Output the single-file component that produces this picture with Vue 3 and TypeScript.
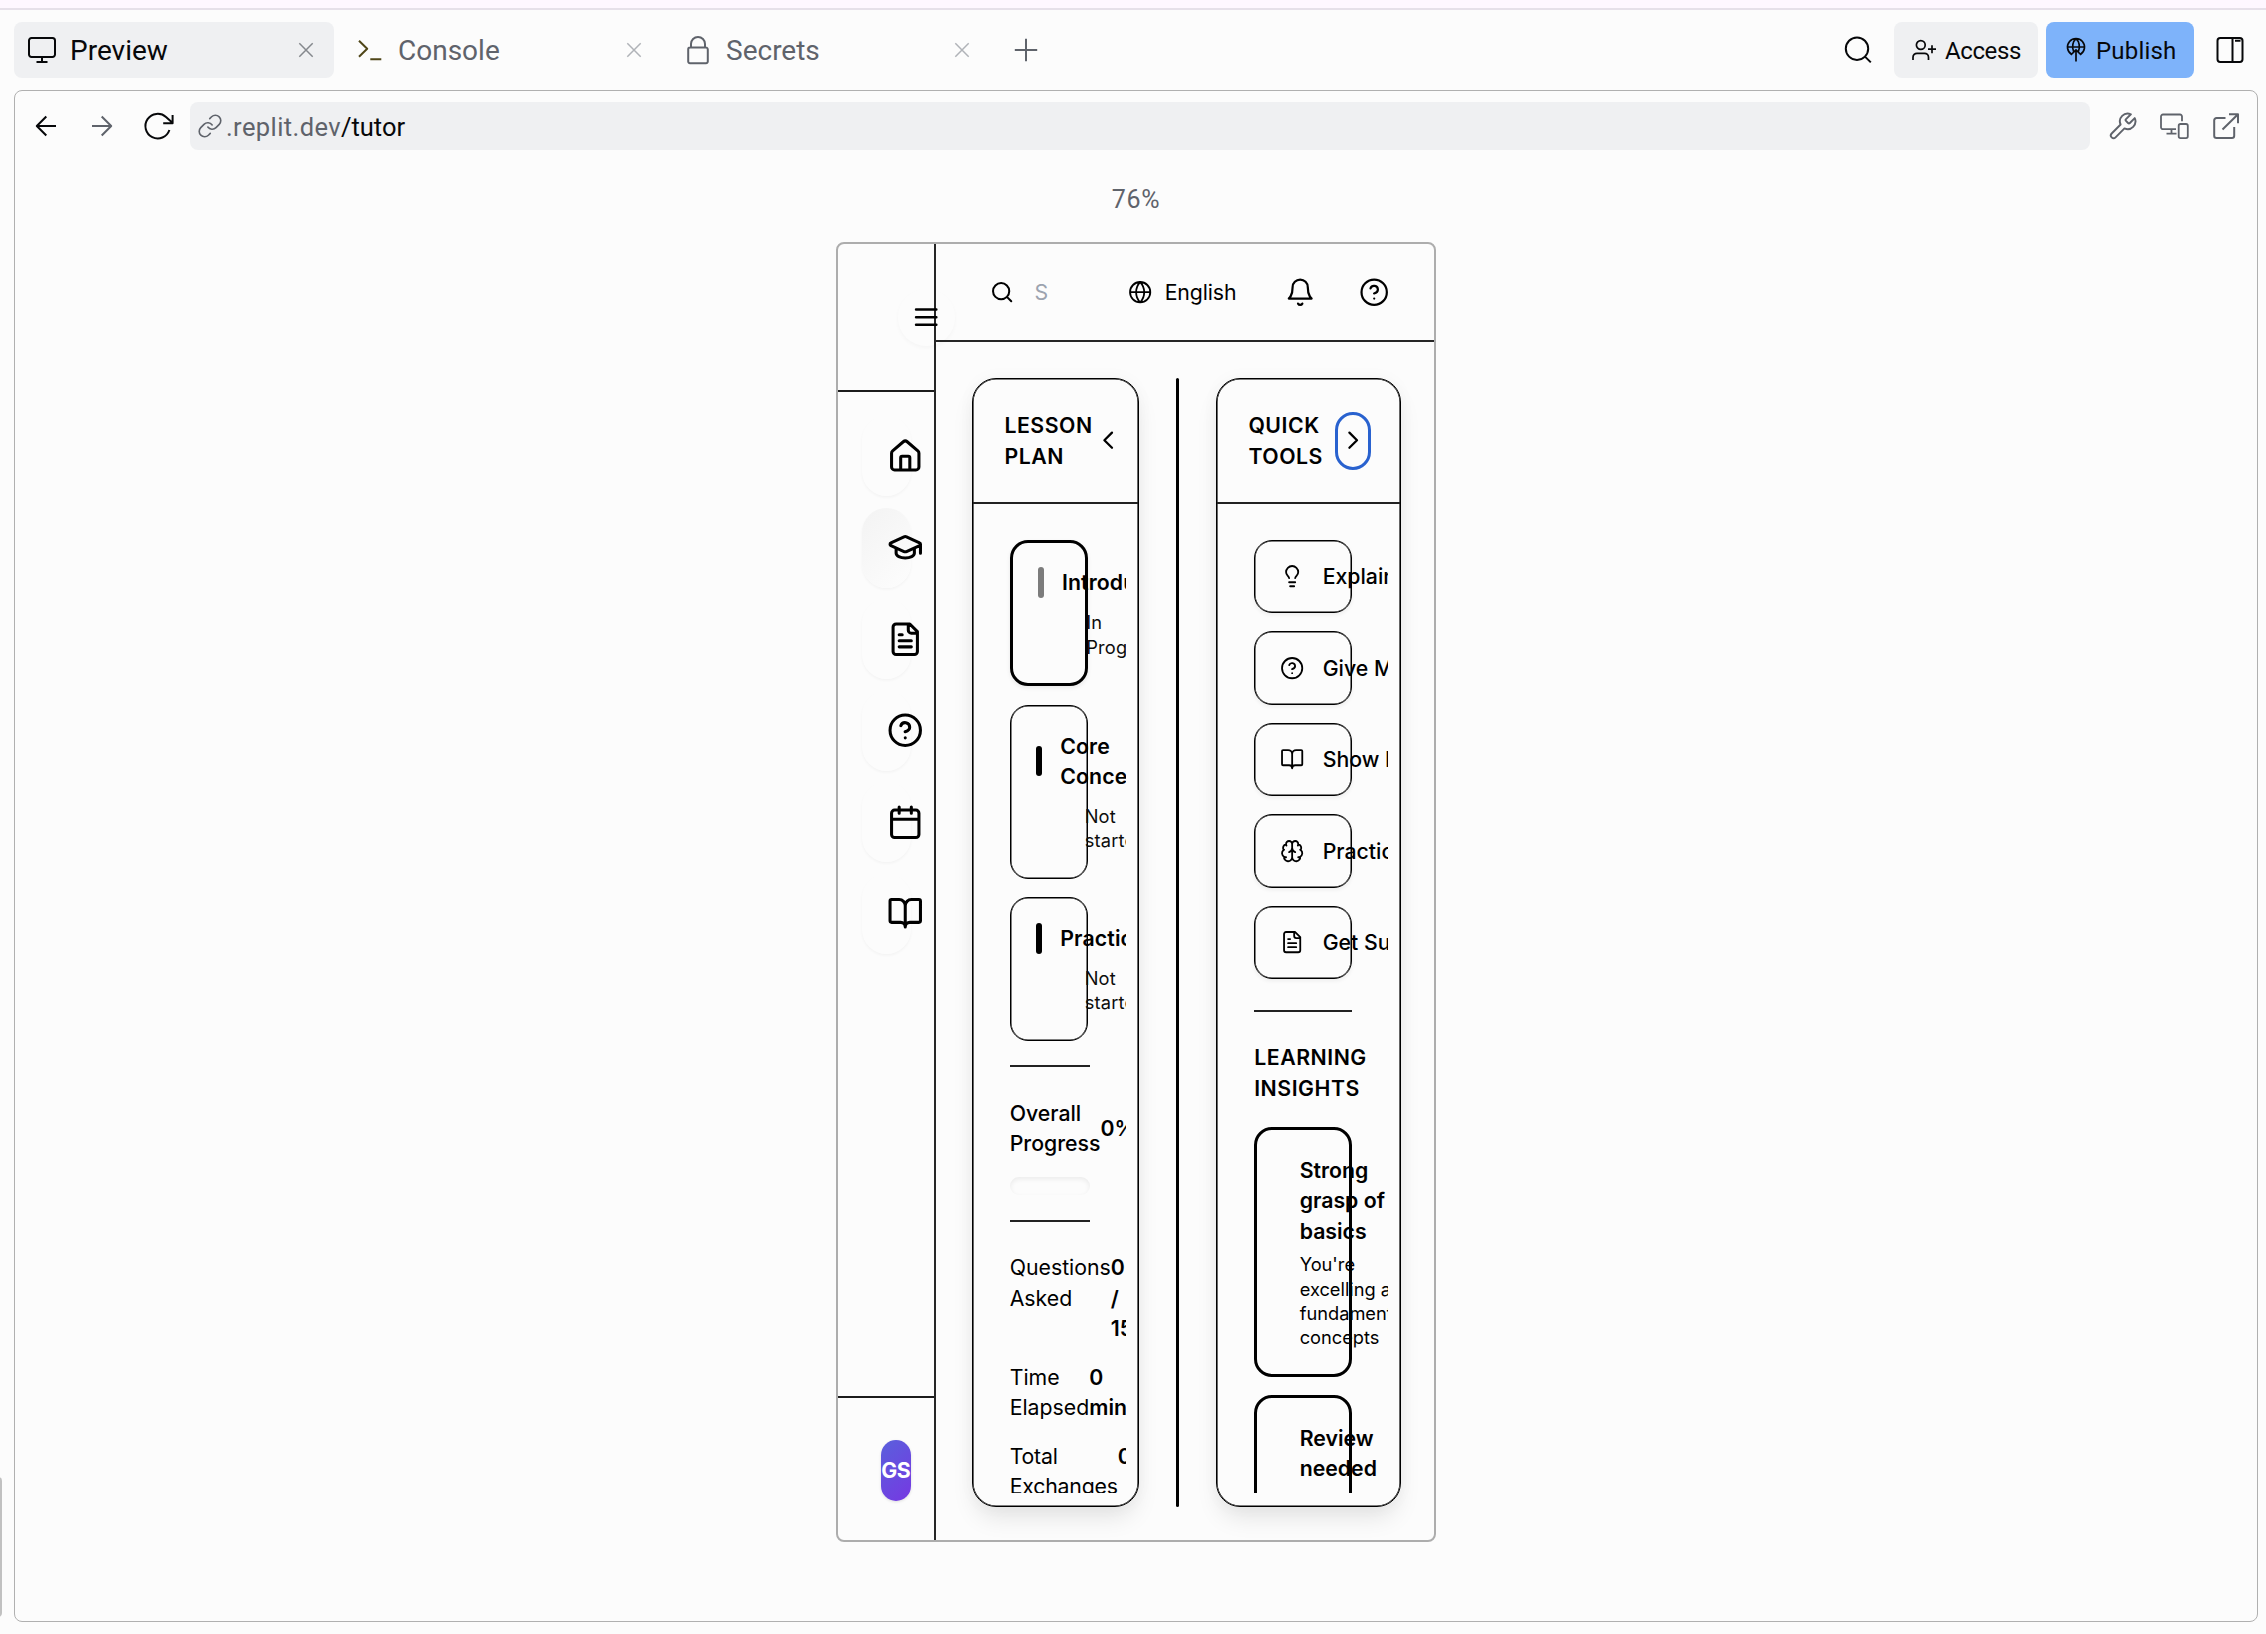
<script setup lang="ts">
import { h, type FunctionalComponent } from 'vue'

// Lucide outlines, drawn on a 24-unit grid
const paths: Record<string, string> = {
  menu: 'M4 12h16M4 6h16M4 18h16',
  home: 'M15 21v-8a1 1 0 0 0-1-1h-4a1 1 0 0 0-1 1v8M3 10a2 2 0 0 1 .709-1.528l7-5.999a2 2 0 0 1 2.582 0l7 5.999A2 2 0 0 1 21 10v9a2 2 0 0 1-2 2H5a2 2 0 0 1-2-2z',
  cap: 'M21.42 10.922a1 1 0 0 0-.019-1.838L12.83 5.18a2 2 0 0 0-1.66 0L2.6 9.08a1 1 0 0 0 0 1.832l8.57 3.908a2 2 0 0 0 1.66 0zM22 10v6M6 12.5V16a6 3 0 0 0 12 0v-3.5',
  file: 'M15 2H6a2 2 0 0 0-2 2v16a2 2 0 0 0 2 2h12a2 2 0 0 0 2-2V7ZM14 2v4a2 2 0 0 0 2 2h4M10 9H8M16 13H8M16 17H8',
  help: 'M22 12a10 10 0 1 1-20 0a10 10 0 1 1 20 0ZM9.09 9a3 3 0 0 1 5.83 1c0 2-3 3-3 3M12 17h.01',
  calendar: 'M8 2v4M16 2v4M5 4h14a2 2 0 0 1 2 2v14a2 2 0 0 1-2 2H5a2 2 0 0 1-2-2V6a2 2 0 0 1 2-2ZM3 10h18',
  book: 'M12 7v14M3 18a1 1 0 0 1-1-1V4a1 1 0 0 1 1-1h5a4 4 0 0 1 4 4 4 4 0 0 1 4-4h5a1 1 0 0 1 1 1v13a1 1 0 0 1-1 1h-6a3 3 0 0 0-3 3 3 3 0 0 0-3-3z',
  search: 'M19 11a8 8 0 1 1-16 0a8 8 0 1 1 16 0ZM21 21l-4.3-4.3',
  globe: 'M22 12a10 10 0 1 1-20 0a10 10 0 1 1 20 0ZM12 2a14.5 14.5 0 0 0 0 20 14.5 14.5 0 0 0 0-20M2 12h20',
  bell: 'M6 8a6 6 0 0 1 12 0c0 7 3 9 3 9H3s3-2 3-9M10.3 21a1.94 1.94 0 0 0 3.4 0',
  left: 'm15 18-6-6 6-6',
  right: 'm9 18 6-6-6-6',
  bulb: 'M15 14c.2-1 .7-1.7 1.5-2.5 1-.9 1.5-2.2 1.5-3.5A6 6 0 0 0 6 8c0 1 .2 2.2 1.5 3.5.7.7 1.3 1.5 1.5 2.5M9 18h6M10 22h4',
  brain: 'M12 5a3 3 0 1 0-5.997.125 4 4 0 0 0-2.526 5.77 4 4 0 0 0 .556 6.588A4 4 0 1 0 12 18ZM12 5a3 3 0 1 1 5.997.125 4 4 0 0 1 2.526 5.77 4 4 0 0 1-.556 6.588A4 4 0 1 1 12 18ZM15 13a4.5 4.5 0 0 1-3-4 4.5 4.5 0 0 1-3 4M17.599 6.5a3 3 0 0 0 .399-1.375M6.003 5.125A3 3 0 0 0 6.401 6.5M3.477 10.896a4 4 0 0 1 .585-.396M19.938 10.5a4 4 0 0 1 .585.396M6 18a4 4 0 0 1-1.967-.516M19.967 17.484A4 4 0 0 1 18 18',
  link: 'M10 13a5 5 0 0 0 7.54.54l3-3a5 5 0 0 0-7.07-7.07l-1.72 1.71M14 11a5 5 0 0 0-7.54-.54l-3 3a5 5 0 0 0 7.07 7.07l1.71-1.71',
  wrench: 'M14.7 6.3a1 1 0 0 0 0 1.4l1.6 1.6a1 1 0 0 0 1.4 0l3.77-3.77a6 6 0 0 1-7.94 7.94l-6.91 6.91a2.12 2.12 0 0 1-3-3l6.91-6.91a6 6 0 0 1 7.94-7.94l-3.76 3.76z',
}

// Workspace glyphs, drawn on a 28-unit grid
const glyphs: Record<string, string> = {
  monitor: 'M3.5 2h21a2.5 2.5 0 0 1 2.5 2.5v14a2.5 2.5 0 0 1-2.5 2.5h-21a2.5 2.5 0 0 1-2.5-2.5v-14A2.5 2.5 0 0 1 3.5 2ZM14 21v5M8.5 26h11',
  terminal: 'm3 4.8 8.2 8-8.2 8M14.3 23.3h11',
  lock: 'M6 11.6h16a1.8 1.8 0 0 1 1.8 1.8v12a1.8 1.8 0 0 1-1.8 1.8H6a1.8 1.8 0 0 1-1.8-1.8v-12A1.8 1.8 0 0 1 6 11.6ZM7 11.5V8a7 7 0 0 1 14 0v3.5',
  close: 'm7.3 7.3 13.4 13.4M20.7 7.3 7.3 20.7',
  plus: 'M14 2.8v22.4M2.8 14h22.4',
  back: 'M14.3 4.5 4.8 14l9.5 9.5M4.8 14H24',
  forward: 'm13.7 4.5 9.5 9.5-9.5 9.5M23.2 14H4',
  reload: 'M24.4 18A12.3 12.3 0 1 1 21 5l6.4 5.7M27.6 3v8.2h-9.4',
  find: 'M24.2 12.7a11.2 11.2 0 1 1-22.4 0a11.2 11.2 0 1 1 22.4 0ZM21 20.6l5.8 5.8',
  user: 'M15.2 9a4.4 4.4 0 1 1-8.8 0a4.4 4.4 0 1 1 8.8 0ZM3 24v-2.7a4 4 0 0 1 4-4h7.5a4 4 0 0 1 4 4V24M22 9.2v8M18 13.2h8',
  publish: 'M7.5 18.2A8.5 8.5 0 1 1 16.5 18.2M3.6 11h16.8M9.6 15.5C7.7 11 8.7 5.5 12 2.6c3.3 2.9 4.3 8.4 2.4 12.9M12 25.5V14M6.8 19l5.2-5.2 5.2 5.2',
  panes: 'M4.2 2h19.6a2.7 2.7 0 0 1 2.7 2.7v18.6a2.7 2.7 0 0 1-2.7 2.7H4.2a2.7 2.7 0 0 1-2.7-2.7V4.7A2.7 2.7 0 0 1 4.2 2ZM16.5 2v24M19 4.8h5.5',
  devices: 'M22 9.3V4.5A2 2 0 0 0 20 2.5H3a2 2 0 0 0-2 2v10.7a2 2 0 0 0 2 2h13M11.5 17.2v4.5M6.5 21.7h10M20.5 12h5.5a1.8 1.8 0 0 1 1.8 1.8v10.5a1.8 1.8 0 0 1-1.8 1.8h-5.5a1.8 1.8 0 0 1-1.8-1.8V13.8a1.8 1.8 0 0 1 1.8-1.8Z',
  external: 'M13.5 6H4.5A2.3 2.3 0 0 0 2.2 8.3v15.4A2.3 2.3 0 0 0 4.5 26h15.4a2.3 2.3 0 0 0 2.3-2.3V15M17 2.3h9v9M26 2.3 10.5 17.5',
}

const Icon: FunctionalComponent<{ name: string; size: number; stroke?: number }> = (p) =>
  h('svg', {
    width: p.size, height: p.size, viewBox: '0 0 24 24', fill: 'none', stroke: 'currentColor',
    'stroke-width': p.stroke ?? 2, 'stroke-linecap': 'round', 'stroke-linejoin': 'round',
    style: { flex: 'none', display: 'block' },
  }, [h('path', { d: paths[p.name] })])
Icon.props = ['name', 'size', 'stroke']

const Glyph: FunctionalComponent<{ name: string; stroke?: number }> = (p) =>
  h('svg', {
    width: 28, height: 28, viewBox: '0 0 28 28', fill: 'none', stroke: 'currentColor',
    'stroke-width': p.stroke ?? 2, 'stroke-linejoin': 'round',
    style: { flex: 'none', display: 'block', overflow: 'visible' },
  }, [h('path', { d: glyphs[p.name] })])
Glyph.props = ['name', 'stroke']

const tabs = [
  { label: 'Preview', icon: 'monitor', active: true },
  { label: 'Console', icon: 'terminal', active: false },
  { label: 'Secrets', icon: 'lock', active: false },
]
const nav = ['home', 'cap', 'file', 'help', 'calendar', 'book']
const lessons = [
  { title: ['Introduction'], status: ['In', 'Progress'], active: true },
  { title: ['Core', 'Concepts'], status: ['Not', 'started'], active: false },
  { title: ['Practice'], status: ['Not', 'started'], active: false },
]
const stats = [
  { label: ['Questions', 'Asked'], value: ['0', '/', '15'] },
  { label: ['Time', 'Elapsed'], value: ['0', 'min'] },
  { label: ['Total', 'Exchanges'], value: ['0'] },
]
const tools = [
  { icon: 'bulb', label: 'Explain' },
  { icon: 'help', label: 'Give Me' },
  { icon: 'book', label: 'Show Examples' },
  { icon: 'brain', label: 'Practice' },
  { icon: 'file', label: 'Get Summary' },
]
const insights = [
  { title: ['Strong', 'grasp of', 'basics'], text: ["You're", 'excelling at', 'fundamental', 'concepts'] },
  { title: ['Review', 'needed'], text: [] },
]
</script>

<template>
  <div class="workspace">
    <div class="strip"></div>
    <div class="edge-thumb"></div>

    <div class="tabbar">
      <div v-for="t in tabs" :key="t.label" class="tab" :class="[{ active: t.active }, t.icon]">
        <Glyph class="tab-icon" :name="t.icon" />
        <span class="tab-label">{{ t.label }}</span>
        <Glyph class="tab-close" name="close" :stroke="1.5" />
      </div>
      <Glyph class="add" name="plus" />
      <span class="grow"></span>
      <Glyph class="find" name="find" />
      <button class="btn access"><Glyph name="user" :stroke="1.7" /><span>Access</span></button>
      <button class="btn publish"><Glyph name="publish" :stroke="1.7" /><span>Publish</span></button>
      <Glyph class="panes" name="panes" />
    </div>

    <div class="pane">
      <div class="urlbar">
        <Glyph name="back" />
        <Glyph class="muted" name="forward" />
        <Glyph class="reload" name="reload" />
        <div class="address">
          <Icon class="muted" name="link" :size="26" :stroke="1.5" />
          <span class="host">.replit.dev</span><span class="path">/tutor</span>
        </div>
        <Icon class="muted wrench" name="wrench" :size="31" :stroke="1.5" />
        <Glyph class="muted devices" name="devices" :stroke="1.8" />
        <Glyph class="muted" name="external" />
      </div>
      <div class="scale">76%</div>

      <div class="device">
        <aside class="side">
          <div class="side-top">
            <div class="menu"><Icon name="menu" :size="30.4" /></div>
          </div>
          <nav class="nav">
            <div v-for="(n, i) in nav" :key="n" class="nav-item" :class="{ on: i === 1 }">
              <Icon :name="n" :size="36.5" />
            </div>
          </nav>
          <div class="side-foot"><div class="avatar">GS</div></div>
        </aside>

        <section class="main">
          <header class="top">
            <Icon name="search" :size="24.3" />
            <span class="query">S</span>
            <Icon name="globe" :size="24.3" :stroke="1.8" />
            <span class="lang">English</span>
            <Icon name="bell" :size="30.4" :stroke="1.75" />
            <Icon class="top-help" name="help" :size="30.4" :stroke="1.75" />
          </header>

          <div class="columns">
            <div class="card lesson">
              <div class="card-head">
                <h2>LESSON<br />PLAN</h2>
                <span class="toggle"><Icon name="left" :size="30.4" :stroke="1.8" /></span>
              </div>
              <div class="scroll">
                <div class="stack items">
                  <div v-for="l in lessons" :key="l.title[0]" class="item" :class="{ current: l.active }">
                    <div class="item-title">
                      <i class="bar"></i>
                      <b><span v-for="w in l.title" :key="w">{{ w }}</span></b>
                    </div>
                    <div class="item-status"><span v-for="w in l.status" :key="w">{{ w }}</span></div>
                  </div>
                </div>
                <div class="rule first"></div>
                <div class="progress">
                  <span class="progress-label">Overall<br />Progress</span><b>0%</b>
                </div>
                <div class="track"></div>
                <div class="rule second"></div>
                <div class="stack stats">
                  <div v-for="s in stats" :key="s.label[0]" class="stat">
                    <div><span v-for="w in s.label" :key="w">{{ w }}</span></div>
                    <b><span v-for="w in s.value" :key="w">{{ w }}</span></b>
                  </div>
                </div>
              </div>
            </div>

            <div class="splitter"></div>

            <div class="card quick">
              <div class="card-head">
                <h2>QUICK<br />TOOLS</h2>
                <span class="toggle focused"><Icon name="right" :size="30.4" :stroke="1.8" /></span>
              </div>
              <div class="scroll">
                <div class="stack">
                  <div v-for="t in tools" :key="t.label" class="tool">
                    <Icon :name="t.icon" :size="24.3" :stroke="1.8" /><span>{{ t.label }}</span>
                  </div>
                </div>
                <div class="rule third"></div>
                <h2 class="sub">LEARNING<br />INSIGHTS</h2>
                <div class="stack">
                  <div v-for="s in insights" :key="s.title[0]" class="insight">
                    <b><span v-for="w in s.title" :key="w">{{ w }}</span></b>
                    <p><span v-for="w in s.text" :key="w">{{ w }}</span></p>
                  </div>
                </div>
              </div>
            </div>
          </div>
        </section>
      </div>
    </div>
  </div>
</template>

<style>
body { background: #fcfcfc; overflow: hidden; }
</style>

<style scoped>
* { box-sizing: border-box; }
.workspace {
  position: relative; width: 2266px; height: 1634px; overflow: hidden;
  display: flex; flex-direction: column; background: #fcfcfc; color: #07080a;
  font-family: Roboto, "Noto Sans", sans-serif; font-size: 24px;
}
.strip { flex: none; height: 10px; background: #fef7ff; border-bottom: 2px solid #e6e0e9; }
.edge-thumb { position: absolute; left: -6px; top: 1477px; width: 8px; height: 140px; border-radius: 4px; background: #c1c1c1; }
.muted { color: #5f636b; }
.grow { flex: 1; }

.tabbar { flex: none; height: 80px; padding: 0 22px 0 14px; display: flex; align-items: center; }
.tab {
  width: 320px; height: 56px; margin-right: 8px; padding: 0 14px; border-radius: 8px;
  display: flex; align-items: center; color: #5f636b; font-size: 28px;
}
.tab.active { background: #eff0f2; color: #07080a; }
.tab.terminal .tab-icon { color: #4f4618; }
.tab-label { flex: 1; margin-left: 14px; padding-top: 2px; line-height: 36px; }
.tab-close { color: #b0b3b8; }
.tab.active .tab-close { color: #85888d; }
.add { margin-left: 14px; color: #5f636b; }
.find { margin-right: 22px; }
.btn {
  height: 56px; border: 0; border-radius: 8px; padding: 0; display: flex; align-items: center;
  font: 24px/32px Roboto, "Noto Sans", sans-serif; color: #07080a;
}
.btn span { padding-top: 2px; }
.access { width: 144px; padding-left: 16px; background: #eff0f2; margin-right: 8px; }
.access span { margin-left: 7px; letter-spacing: -.4px; }
.publish { width: 148px; padding-left: 18px; background: #7eb3fa; margin-right: 22px; }
.publish span { margin-left: 4px; letter-spacing: .2px; }

.pane {
  flex: none; width: 2244px; height: 1532px; margin-left: 14px; border: 1px solid #b0b0b0; border-radius: 8px;
  display: flex; flex-direction: column; align-items: center;
}
.urlbar { align-self: stretch; margin-top: 11px; height: 48px; padding: 0 16px 0 17px; display: flex; align-items: center; gap: 28px; }
.reload { margin-left: 1px; }
.address {
  flex: none; width: 1900px; height: 48px; margin-left: -11px; margin-right: -11px; padding-left: 7px;
  border-radius: 8px; background: #eff0f2; display: flex; align-items: center;
}
.wrench { margin-right: -6px; }
.devices { margin-right: -4px; }
.host, .path { font-size: 25.5px; padding-top: 2px; }
.host { margin-left: 3px; color: #5f636b; letter-spacing: .4px; }
.path { letter-spacing: 0; }
.scale { height: 32px; margin-top: 33px; font-size: 25px; line-height: 34px; color: #5f636b; letter-spacing: .7px; }

.device {
  flex: none; width: 600px; height: 1300px; margin-top: 27px; border: 2px solid #adadad; border-radius: 8px;
  display: flex; color: #000; font: 21.28px/30.4px Inter, "Liberation Sans", sans-serif;
}
.side { flex: none; width: 98px; border-right: 2px solid #262626; display: flex; flex-direction: column; }
.side-top { flex: none; height: 148px; border-bottom: 2px solid #1c1c1c; padding: 45px 0 0 60px; }
.menu {
  width: 57px; height: 57px; border-radius: 50%; display: flex; align-items: center; justify-content: center;
  box-shadow: 0 2px 4px rgba(0, 0, 0, .03);
}
.nav { flex: 1; padding: 24px 0 0 24px; display: flex; flex-direction: column; gap: 11.5px; }
.nav-item {
  width: 49px; height: 80px; border-radius: 24.5px; padding-left: 25px; display: flex; align-items: center;
  box-shadow: 0 1.5px 3px rgba(0, 0, 0, .04);
}
.nav-item.on { background: linear-gradient(135deg, #f3f3f3, #fdfdfd); }
.side-foot { flex: none; height: 144px; border-top: 2px solid #1c1c1c; padding: 42px 0 0 42.6px; }
.avatar {
  width: 30.4px; height: 61px; border-radius: 15.2px; display: flex; align-items: center; justify-content: center;
  background: linear-gradient(135deg, #5a60dc, #7638e2); color: #fff; font-weight: 700; letter-spacing: -.4px;
  box-shadow: 0 1px 3px rgba(0, 0, 0, .12);
}

.main { flex: none; width: 498px; display: flex; flex-direction: column; }
.top { flex: none; height: 98px; border-bottom: 2px solid #262626; padding: 0 0 0 54.2px; display: flex; align-items: center; }
.query { width: 94.6px; padding-left: 20px; margin-right: 19.3px; color: #9ca3af; }
.lang { width: 120.8px; margin-left: 12px; letter-spacing: -.1px; }
.top-help { margin-left: 43px; }

.columns { flex: none; height: 1129px; margin: 36px 0 0 36px; display: flex; }
.card {
  flex: none; height: 1129px; border: 1px solid #000; border-radius: 24px; display: flex; flex-direction: column;
  box-shadow: inset 0 0 0 .6px #000, 0 14px 24px -4px rgba(0, 0, 0, .1), 0 0 18px rgba(0, 0, 0, .03);
}
.lesson { width: 167.4px; margin-right: 36.6px; }
.splitter { flex: none; width: 3px; background: #000; border-radius: 1.5px; margin-right: 37px; }
.quick { width: 185px; }
.card-head { flex: none; height: 125px; border-bottom: 2px solid #222; display: flex; align-items: center; padding-left: 31.4px; }
h2 { margin: 0; font: 600 21.28px/30.4px Inter, "Liberation Sans", sans-serif; letter-spacing: .53px; white-space: nowrap; }
.lesson h2 { width: 89.5px; }
.quick .card-head h2 { width: 87px; }
.toggle { width: 36px; height: 58px; border-radius: 18px; display: flex; align-items: center; justify-content: center; flex: none; }
.lesson .toggle { margin-left: -4px; }
.toggle.focused { border: 3px solid #2962cf; }
.scroll { flex: none; height: 989px; margin-right: 12.2px; padding: 36px 36.4px 0 36.7px; overflow: hidden; }
.quick .scroll { padding-left: 37.2px; padding-right: 36px; }
.stack { display: flex; flex-direction: column; gap: 18.3px; }
.items { gap: 18.6px; }
.stack b span, .item-status span, .stat div span, p span { display: block; white-space: nowrap; }
b { font-weight: 600; }

.item {
  border: 1px solid #000; box-shadow: inset 0 0 0 .5px #000; border-radius: 18px; padding: 25px 25.4px;
  width: 78.5px;
}
.item.current { border-width: 3px; padding: 24.4px 25px; box-shadow: 0 2px 4px rgba(0, 0, 0, .08); }
.item-title { display: flex; align-items: center; gap: 18.2px; width: max-content; }
.item-title b { letter-spacing: .12px; }
.bar { width: 6px; height: 30.4px; border-radius: 3px; background: #000; }
.current .bar { background: #7c7c7c; }
.item-status { margin: 12.4px 0 0 48.6px; font-size: 18.24px; line-height: 24.32px; letter-spacing: .18px; color: #0c0c0c; }
.rule { width: 100%; height: 2px; background: #222; }
.first { margin: 24.6px 0 30.4px; }
.second { margin: 25px 0 30.4px; }
.third { margin: 30.8px 0 30.4px; }
.progress { display: flex; align-items: center; font-weight: 500; width: max-content; }
.track { height: 18.2px; margin-top: 18.2px; border-radius: 9px; box-shadow: inset 0 2px 5px rgba(0, 0, 0, .07); }
.stat { display: flex; justify-content: space-between; min-width: 78.6px; width: max-content; }
.stat:last-child div { letter-spacing: -.2px; }

.tool {
  height: 73.2px; border: 1px solid #000; border-radius: 18px; padding-left: 25px;
  display: flex; align-items: center; gap: 18.2px; font-weight: 500; white-space: nowrap;
  box-shadow: inset 0 0 0 .5px #000, 0 2px 4px rgba(0, 0, 0, .06);
}
.sub { margin-bottom: 24.3px; }
.insight { border: 3px solid #000; border-radius: 18px; padding: 24.5px 0 24.5px 42.5px; }
.insight:last-child { min-height: 150px; }
.insight p { margin: 6.3px 0 0; font-size: 18.24px; line-height: 24.32px; }
</style>
